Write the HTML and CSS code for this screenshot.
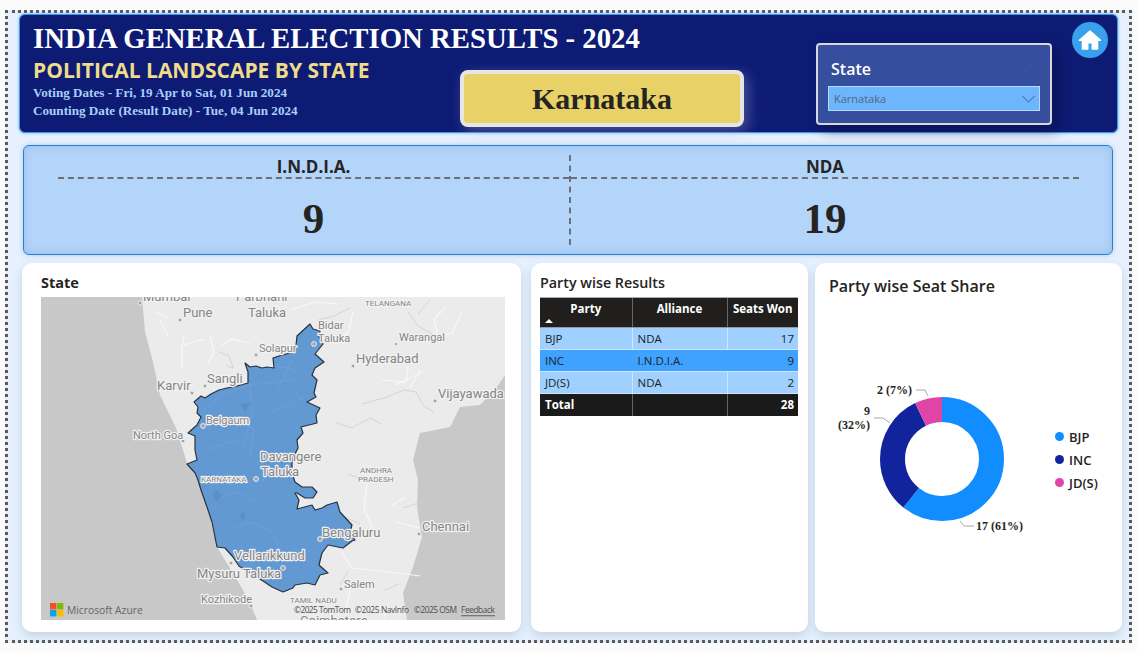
FILE: index.html
```html
<!DOCTYPE html>
<html lang="en">
<head>
  <meta charset="UTF-8">
  <title>India General Election Results 2024</title>
  <link rel="stylesheet" href="styles.css">
</head>
<body>

  <div class="report">

    <header class="banner">
      <h1 class="banner-title">INDIA GENERAL ELECTION RESULTS - 2024</h1>
      <div class="banner-text">
        <h2>POLITICAL LANDSCAPE BY STATE</h2>
        <p>Voting Dates - Fri, 19 Apr to Sat, 01 Jun 2024</p>
        <p>Counting Date (Result Date) - Tue, 04 Jun 2024</p>
      </div>
      <div class="state-chip">Karnataka</div>
      <div class="slicer">
        <div class="slicer-head">
          <span>State</span>
          <svg class="chevron dim" viewBox="0 0 14 8"><path d="M1 1l6 6 6-6"/></svg>
        </div>
        <div class="slicer-select">
          <span>Karnataka</span>
          <svg class="chevron" viewBox="0 0 14 8"><path d="M1 1l6 6 6-6"/></svg>
        </div>
      </div>
      <a class="home" href="#">
        <svg viewBox="0 0 36 36">
          <circle cx="18" cy="18" r="18" fill="#3aa0ec"/>
          <path fill="#fff" stroke="#fff" stroke-width="1.6" stroke-linejoin="round" d="M18 9L7.5 18.3h3V27h5.2v-6.2h4.6V27h5.2v-8.7h3z"/>
        </svg>
      </a>
    </header>

    <section class="kpis">
      <div class="kpi">
        <div class="kpi-label">I.N.D.I.A.</div>
        <div class="kpi-value">9</div>
      </div>
      <div class="kpi">
        <div class="kpi-label">NDA</div>
        <div class="kpi-value">19</div>
      </div>
    </section>

    <section class="cards">

      <div class="card card-map">
        <h3 class="map-title">State</h3>
        <svg class="map" viewBox="41 297 464 323">
          <rect x="41" y="297" width="464" height="323" fill="#c8c8c8"/>
          <path fill="#ebebeb" d="M142 297L145 332L153 362L160 395L176 428L183 450L187 463L198 480L210 517L217 547L233 573L243 590L253 610L257 620H407L403 593L413 567L422 537L417 507L418 480L413 460L420 433L450 427L460 407L480 405L497 387L505 375V297Z"/>

          <g class="road">
            <path d="M160 320l8 16M155 312l14 6M184 335l-2 12 0 22M183 345l22-6M210 335l4 18-6 10M222 345l10-6 18 4M290 310l26-8 22 2M335 345l14-14 4-20M462 313l-10 20-14 4-4-18 12-12M382 380l24 2 2-16M395 385l30-14M420 370l-10 18M368 478l-4 30 8 20M392 505l14-8M395 522l24 6M342 552l10 16 38 4 30 4M373 530l6 4M350 590l-4 20M388 604l-4 14"/>
          </g>
          <g class="river">
            <path d="M219 352l10 4 4 12-6-2M350 308l-16 8 -16 4M408 312l10 14 14 8M430 300l-12 14M362 404l22-6 20-8 12 2 8 14 10 6M335 422l16 6 20-10 10 6M403 508l12-4 8-2M330 510l30 14M348 474l20 8 14-2M340 585l8-14M385 590l14-6"/>
          </g>

          <path class="state-shape" d="M310 324L313 329L320 331L319 337L323 344L315 354L324 362L315 368L312 375L317 380L314 393L316 397L307 402L320 408L316 415L317 423L301 427L303 433L297 440L298 448L293 458L292 462L292 473L295 482L302 487L312 487L317 492L313 498L305 498L297 493L295 493L299 500L297 509L312 505L315 510L322 508L327 505L337 502L340 512L352 525L350 532L355 540L352 541L343 548L328 545L322 553L319 565L328 573L320 575L315 585L307 583L295 585L293 588L283 592L272 587L263 581L239 566L233 557L225 548L217 547L212 522L207 507L201 490L198 480L195 473L187 464L197 460L195 450L195 445L195 436L188 433L197 425L201 417L197 413L198 407L194 402L201 396L205 398L211 394L219 390L227 388L237 386L248 383L248 372L245 363L250 367L256 366L262 368L267 367L274 368L273 358L279 356L286 354L295 352L296 345L297 336Z"/>
          <g class="state-line">
            <path d="M200 415l20-20 30-10 30-3 18-4M296 372l-8-4-14-2M250 385l2 30 -8 30M244 420l10 10 -4 26M272 412l36-16M300 400l-8-14M292 360l-14 30M206 450l30-10 10 10M215 500l20-8 24 10M230 530l20-8 20 8 8 14M262 452l2 30M295 548l16 16 6 6"/>
          </g>
          <path class="state-lake" d="M240 404l8-1 5-1-5 4-2 6-3-4zM212 495l4-5 4 4 3 2-4 2 0 4-4-2zM240 514l5-2 0 6-3 3z"/>

          <g class="dots">
            <circle cx="140" cy="303" r="2"/><circle cx="180" cy="320" r="2"/><circle cx="256" cy="355" r="2"/>
            <circle cx="205" cy="386" r="2"/><circle cx="192" cy="393" r="2"/><circle cx="183" cy="441" r="2"/>
            <circle cx="203" cy="426" r="2.4"/><circle cx="256" cy="479" r="2.4"/><circle cx="314" cy="344" r="2.4"/>
            <circle cx="353" cy="366" r="2"/><circle cx="396" cy="344" r="1.6"/><circle cx="435" cy="401" r="2"/>
            <circle cx="419" cy="534" r="2"/><circle cx="320" cy="539" r="2.4"/><circle cx="283" cy="568" r="2.4"/>
            <circle cx="231" cy="563" r="2"/><circle cx="341" cy="589" r="2"/><circle cx="251" cy="606" r="2"/>
          </g>

          <g class="labels">
            <text class="lg" x="143" y="301">Mumbai</text>
            <text class="lg" x="183" y="317">Pune</text>
            <text class="lg" x="236" y="301">Parbhani</text>
            <text class="lg" x="248" y="317">Taluka</text>
            <text class="md" x="259" y="352">Solapur</text>
            <text class="lg" x="207" y="383">Sangli</text>
            <text class="lg" x="157" y="390">Karvir</text>
            <text class="md" x="133" y="439">North Goa</text>
            <text class="md" x="206" y="424">Belgaum</text>
            <text class="sm" x="201" y="482">KARNATAKA</text>
            <text class="lg" x="260" y="461">Davangere</text>
            <text class="lg" x="261" y="476">Taluka</text>
            <text class="md" x="318" y="329">Bidar</text>
            <text class="md" x="318" y="342">Taluka</text>
            <text class="lg" x="356" y="363">Hyderabad</text>
            <text class="md" x="399" y="341">Warangal</text>
            <text class="sm" x="365" y="306">TELANGANA</text>
            <text class="lg" x="438" y="398">Vijayawada</text>
            <text class="sm" x="360" y="473">ANDHRA</text>
            <text class="sm" x="358" y="482">PRADESH</text>
            <text class="lg" x="422" y="531">Chennai</text>
            <text class="lg" x="322" y="537">Bengaluru</text>
            <text class="lg" x="234" y="560">Vellarikkund</text>
            <text class="lg" x="197" y="578">Mysuru Taluka</text>
            <text class="md" x="344" y="588">Salem</text>
            <text class="md" x="201" y="603">Kozhikode</text>
            <text class="sm" x="290" y="603">TAMIL NADU</text>
            <text class="lg" x="300" y="625">Coimbatore</text>
          </g>

          <rect x="50" y="603" width="6.4" height="6.4" fill="#f25022"/>
          <rect x="57" y="603" width="6.4" height="6.4" fill="#7fba00"/>
          <rect x="50" y="610" width="6.4" height="6.4" fill="#00a4ef"/>
          <rect x="57" y="610" width="6.4" height="6.4" fill="#ffb900"/>
          <text class="azure" x="67" y="614">Microsoft Azure</text>
          <text class="credit" x="294" y="613" textLength="57">©2025 TomTom</text>
          <text class="credit" x="355" y="613" textLength="54">©2025 NavInfo</text>
          <text class="credit" x="414" y="613" textLength="43">©2025 OSM</text>
          <text class="credit" x="461" y="613" textLength="34">Feedback</text>
          <rect x="461" y="615" width="34" height="1.3" fill="#777"/>
        </svg>
      </div>

      <div class="card card-table">
        <h3>Party wise Results</h3>
        <table class="results">
          <thead>
            <tr>
              <th class="col-party">Party<span class="sort"></span></th>
              <th class="col-alliance">Alliance</th>
              <th class="col-seats">Seats Won</th>
            </tr>
          </thead>
          <tbody>
            <tr><td>BJP</td><td>NDA</td><td class="num">17</td></tr>
            <tr class="hl"><td>INC</td><td>I.N.D.I.A.</td><td class="num">9</td></tr>
            <tr><td>JD(S)</td><td>NDA</td><td class="num">2</td></tr>
          </tbody>
          <tfoot>
            <tr><td>Total</td><td></td><td class="num">28</td></tr>
          </tfoot>
        </table>
      </div>

      <div class="card card-donut">
        <h3>Party wise Seat Share</h3>
        <div class="donut-row">
          <svg class="donut" viewBox="815 370 232 180">
            <g transform="rotate(-90 942 459)" fill="none" stroke-width="25">
              <circle cx="942" cy="459" r="49.5" pathLength="28" stroke="#118dff" stroke-dasharray="17 11"/>
              <circle cx="942" cy="459" r="49.5" pathLength="28" stroke="#12239e" stroke-dasharray="9 19" stroke-dashoffset="-17"/>
              <circle cx="942" cy="459" r="49.5" pathLength="28" stroke="#e044a7" stroke-dasharray="2 26" stroke-dashoffset="-26"/>
            </g>
            <path class="leader" d="M916 390h9l3 6M874 418h9l7 5M960 521l4 5h10"/>
            <text class="share" x="877" y="394">2 (7%)</text>
            <text class="share" x="864" y="415">9</text>
            <text class="share" x="838" y="429">(32%)</text>
            <text class="share" x="976" y="530">17 (61%)</text>
          </svg>
          <ul class="legend">
            <li><i class="dot bjp"></i>BJP</li>
            <li><i class="dot inc"></i>INC</li>
            <li><i class="dot jds"></i>JD(S)</li>
          </ul>
        </div>
      </div>

    </section>
  </div>

</body>
</html>
```

FILE: styles.css
```css
* {
  box-sizing: border-box;
}

body {
  margin: 0;
  background-color: #fbfbfb;
  font-family: 'Open Sans', 'Noto Sans', sans-serif;
  overflow: hidden;
}

.report {
  width: 1127px;
  height: 633px;
  margin: 10px 0 0 5px;
  padding: 1px 0 0 11px;
  border: 3px dotted #5a5a5a;
  background-color: #e6f1fd;
  display: flex;
  flex-direction: column;
}

/* banner */
.banner {
  width: 1099px;
  height: 119px;
  flex: none;
  display: grid;
  grid-template-columns: 441px 282px 73px 236px 1fr;
  grid-template-rows: 55px 1fr;
  background-color: #0d1b74;
  border: 1px solid #3f96ea;
  border-radius: 6px;
  box-shadow: 0 0 3px #5fa8ee;
}

.banner-title {
  grid-column: 1 / 5;
  grid-row: 1;
  margin: 5px 0 0 13px;
  color: #fff;
  font-family: 'Liberation Serif', serif;
  font-size: 28.75px;
  line-height: 36px;
  font-weight: bold;
  white-space: nowrap;
}

.banner-text {
  grid-column: 1;
  grid-row: 2;
  padding-left: 13px;
  margin-top: -13px;
}

.banner-text h2 {
  margin: 0;
  color: #efdc8a;
  font-size: 21px;
  line-height: 27px;
  font-weight: 700;
  white-space: nowrap;
}

.banner-text p {
  margin: 0;
  color: #a9cff8;
  font-family: 'Liberation Serif', serif;
  font-weight: bold;
  font-size: 13.15px;
  line-height: 18px;
  white-space: nowrap;
}

.state-chip {
  grid-column: 2;
  grid-row: 2;
  height: 57px;
  margin: 0 -1px 0 -1px;
  display: flex;
  align-items: center;
  justify-content: center;
  background-color: #e8d166;
  border: 4px solid #e7e6e2;
  border-radius: 8px;
  box-shadow: 4px 4px 14px rgba(190, 190, 220, 0.35);
  color: #252423;
  font-family: 'Liberation Serif', serif;
  font-size: 30px;
  font-weight: bold;
}

.slicer {
  grid-column: 4;
  grid-row: 1 / 3;
  height: 82px;
  margin-top: 28px;
  padding: 13px 10px 0 10px;
  background-color: #354e9d;
  border: 2px solid #d6d8de;
  border-radius: 4px;
  box-shadow: 6px 6px 14px rgba(5, 10, 50, 0.4);
}

.slicer-head {
  height: 28px;
  padding: 0 7px 0 3px;
  display: flex;
  justify-content: space-between;
  align-items: flex-start;
  color: #fff;
  font-size: 16px;
  line-height: 22px;
  font-weight: 600;
}

.chevron {
  width: 15px;
  height: 8px;
  fill: none;
  stroke: #46607f;
  stroke-width: 1;
}

.chevron.dim {
  margin-top: 6px;
  stroke: #4d5a88;
}

.slicer-select {
  height: 25px;
  padding: 0 3px 0 5px;
  display: flex;
  justify-content: space-between;
  align-items: center;
  background-color: #6db6fe;
  border: 1px solid #b7d9fa;
  color: #55647c;
  font-size: 11px;
}

.home {
  grid-column: 5;
  grid-row: 1;
  width: 36px;
  height: 36px;
  margin: 7px 0 0 20px;
}

/* kpi strip */
.kpis {
  width: 1090px;
  height: 110px;
  flex: none;
  margin: 12px 0 0 4px;
  padding: 9px 33px 9px 34px;
  display: grid;
  grid-template-columns: 511px 1fr;
  background-color: #b3d5fa;
  border: 1px solid #2a7fd6;
  border-radius: 6px;
  box-shadow: inset 0 0 10px rgba(120, 160, 215, 0.45), 0 0 5px rgba(120, 170, 230, 0.5);
}

.kpi + .kpi {
  border-left: 2px dashed #6c6f76;
}

.kpi-label {
  height: 24px;
  border-bottom: 2px dashed #6c6f76;
  color: #252423;
  font-size: 17px;
  line-height: 24px;
  font-weight: 700;
  text-align: center;
}

.kpi-value {
  margin-top: 15px;
  color: #252423;
  font-family: 'Liberation Serif', serif;
  font-size: 43px;
  line-height: 50px;
  font-weight: bold;
  text-align: center;
}

/* bottom row */
.cards {
  flex: none;
  display: flex;
  margin: 8px 0 0 3px;
  height: 369px;
}

.card {
  background-color: #fff;
  border-radius: 10px;
  box-shadow: 0 4px 10px rgba(120, 145, 180, 0.3);
}

.card h3 {
  margin: 0;
  color: #252423;
  font-weight: 600;
}

.card-map {
  width: 499px;
  padding: 10px 16px 0 19px;
}

.card-map h3 {
  font-size: 14.5px;
  line-height: 20px;
  height: 24px;
  font-weight: 700;
}

.map {
  display: block;
  width: 464px;
  height: 323px;
}

.road path {
  fill: none;
  stroke: #f8f8f8;
  stroke-width: 1.2;
}

.river path {
  fill: none;
  stroke: #cdcdcd;
  stroke-width: 0.8;
}

.state-shape {
  fill: #6299d2;
  stroke: #27323f;
  stroke-width: 1.2;
  stroke-linejoin: round;
}

.state-line path {
  fill: none;
  stroke: #6fa2d8;
  stroke-width: 0.8;
}

.state-lake {
  fill: #5a8fc7;
}

.dots circle {
  fill: #a3a3a3;
  stroke: #efefef;
  stroke-width: 1;
}

.labels text {
  fill: #858585;
  font-family: Roboto, sans-serif;
  stroke: #f2f2f2;
  stroke-width: 2.4px;
  paint-order: stroke;
  stroke-linejoin: round;
}

.labels .lg {
  font-size: 13px;
}

.labels .md {
  font-size: 11px;
}

.labels .sm {
  font-size: 8px;
}

.azure {
  fill: #666;
  font-size: 10.3px;
}

.credit {
  fill: #4f4f4f;
  font-size: 8.4px;
}

.card-table {
  width: 277px;
  margin-left: 10px;
  padding: 10px 10px 0 9px;
}

.card-table h3 {
  font-size: 14.3px;
  line-height: 20px;
  height: 24px;
}

.results {
  width: 258px;
  border-collapse: collapse;
  font-size: 11.5px;
  color: #201f1e;
  table-layout: fixed;
}

.results th {
  height: 30px;
  padding: 3px 2px 0;
  vertical-align: top;
  background-color: #201f1e;
  color: #fff;
  font-weight: 700;
  border-left: 1px solid #666;
  border-bottom: 1px solid #999;
  border-top: 1px solid #aaa;
  white-space: nowrap;
}

.col-party {
  width: 92px;
  position: relative;
}

.col-alliance {
  width: 95px;
}

.sort {
  position: absolute;
  left: 5px;
  bottom: 4px;
  border: 4px solid transparent;
  border-top: 0;
  border-bottom: 4px solid #fff;
}

.results td {
  height: 22px;
  padding: 0 4px 0 5px;
  background-color: #9fd0ff;
  border-bottom: 1px solid #cfe6fd;
  border-left: 1px solid #cfe6fd;
}

.results td:first-child,
.results th:first-child {
  border-left: 0;
}

.results .hl td {
  background-color: #3fa2ff;
  border-left-color: #3fa2ff;
}

.results .num {
  text-align: right;
}

.results tfoot td {
  background-color: #1a1a1a;
  color: #fff;
  font-weight: 700;
  border-left-color: #666;
  border-bottom: 0;
}

.card-donut {
  width: 307px;
  margin-left: 7px;
  padding-top: 11px;
}

.card-donut h3 {
  padding-left: 14px;
  font-size: 16px;
  line-height: 24px;
}

.donut-row {
  display: flex;
  align-items: flex-start;
  margin-top: 72px;
}

.donut {
  width: 232px;
  height: 180px;
  flex: none;
}

.leader {
  fill: none;
  stroke: #a9a9a9;
  stroke-width: 1;
}

.share {
  fill: #252423;
  font-family: 'Liberation Serif', serif;
  font-size: 12px;
  font-weight: bold;
}

.legend {
  margin: 55px 0 0 8px;
  padding: 0;
  list-style: none;
  color: #252423;
  font-size: 13px;
  font-weight: 600;
}

.legend li {
  height: 23px;
  display: flex;
  align-items: center;
  gap: 5px;
}

.dot {
  width: 9px;
  height: 9px;
  border-radius: 50%;
}

.dot.bjp {
  background-color: #118dff;
}

.dot.inc {
  background-color: #12239e;
}

.dot.jds {
  background-color: #e044a7;
}
```
